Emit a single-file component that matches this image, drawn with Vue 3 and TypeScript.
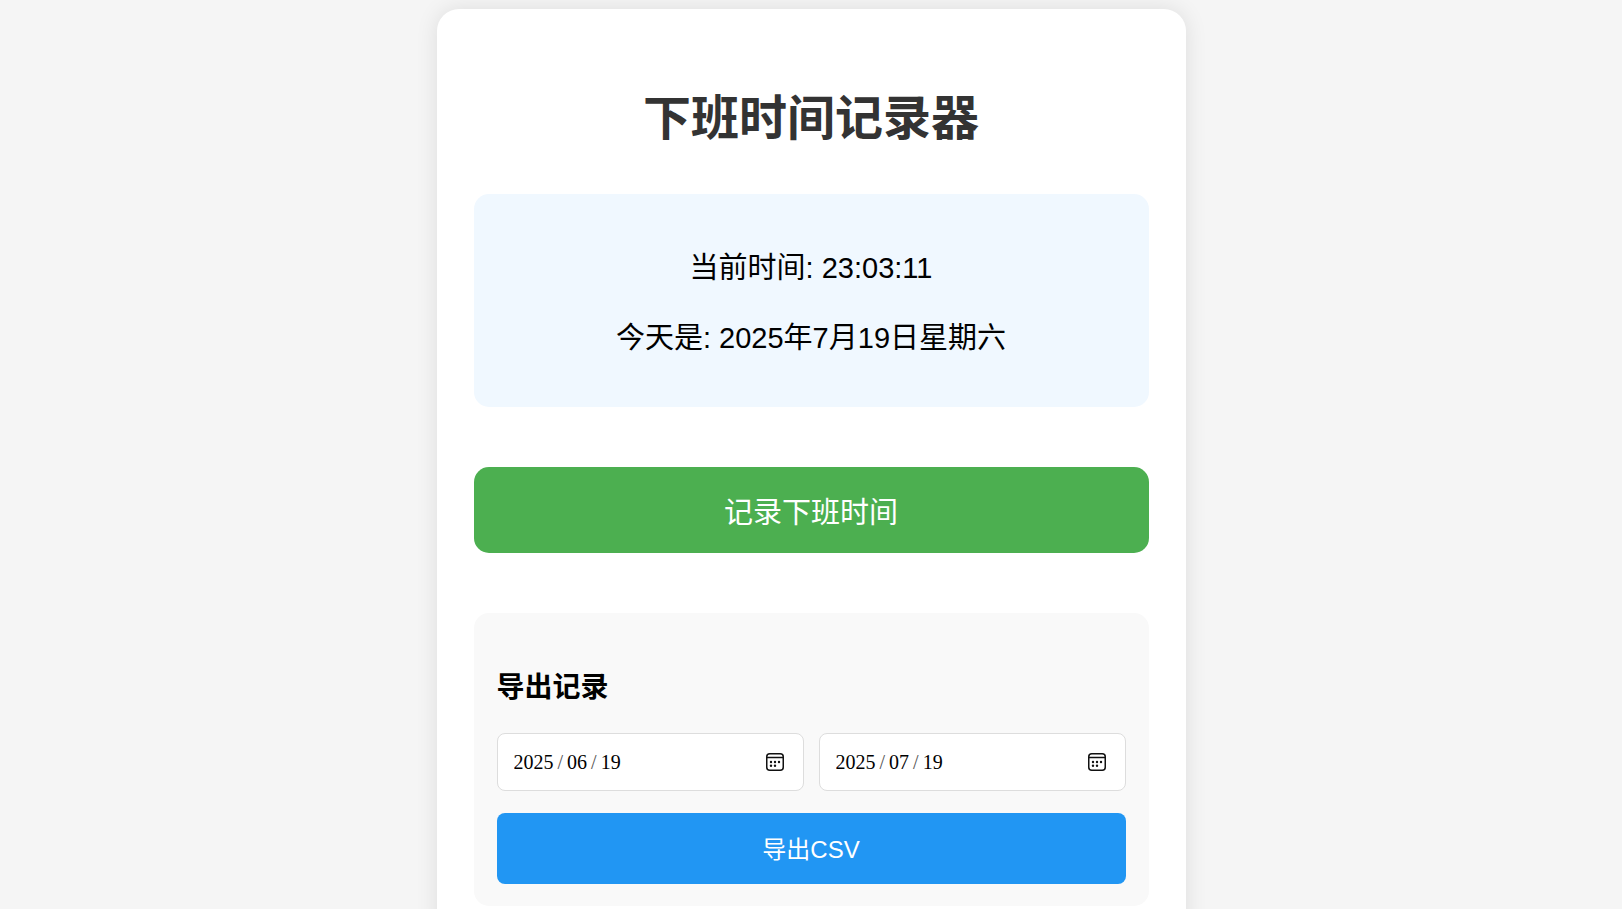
<script setup lang="ts">
import { ref } from 'vue'

interface DateField {
  id: string
  label: string
  value: string
}

const currentTime = ref('23:03:11')
const currentDate = ref('2025年7月19日星期六')
const dates = ref<DateField[]>([
  { id: 'start-date', label: '开始日期', value: '2025-06-19' },
  { id: 'end-date', label: '结束日期', value: '2025-07-19' },
])
</script>

<template>
  <main class="card">
    <h1>下班时间记录器</h1>

    <section class="clock">
      <p>当前时间: <span>{{ currentTime }}</span></p>
      <p>今天是: <span>{{ currentDate }}</span></p>
    </section>

    <button class="record" type="button">记录下班时间</button>

    <section class="export">
      <h3>导出记录</h3>
      <div class="range">
        <label v-for="d in dates" :key="d.id" class="date" :for="d.id">
          <input :id="d.id" v-model="d.value" type="date" :aria-label="d.label" />
          <svg class="calendar" viewBox="0 0 18 18" aria-hidden="true">
            <rect x="0.75" y="0.75" width="16.5" height="16.5" rx="3" />
            <path d="M1 4.5H17" />
            <g class="dots">
              <circle cx="5" cy="9" r="1.2" />
              <circle cx="9" cy="9" r="1.2" />
              <circle cx="13" cy="9" r="1.2" />
              <circle cx="5" cy="12.7" r="1.2" />
              <circle cx="9" cy="12.7" r="1.2" />
            </g>
          </svg>
        </label>
      </div>
      <button class="csv" type="button">导出CSV</button>
    </section>
  </main>
</template>

<style>
body {
  margin: 0;
  background: #f5f5f5;
}
</style>

<style scoped>
.card {
  box-sizing: border-box;
  max-width: 749px;
  margin: 9px auto;
  padding: 37px;
  border-radius: 22px;
  background: #fff;
  box-shadow: 0 0 22px rgba(0, 0, 0, 0.1);
  color: #000;
  font-family: "Liberation Sans", Arial, "Noto Sans CJK SC", sans-serif;
}

h1 {
  margin: 37px 0 39px;
  color: #333;
  font-size: 48px;
  line-height: 72px;
  text-align: center;
}

.clock {
  margin-bottom: 60px;
  padding: 25px 22px 19px;
  border-radius: 15px;
  background: #f0f8ff;
  font-size: 29px;
  line-height: 41px;
  text-align: center;
}

.clock p {
  margin: 29px 0;
}

button {
  display: block;
  width: 100%;
  border: 0;
  color: #fff;
  font-family: inherit;
  cursor: pointer;
}

.record {
  margin-bottom: 60px;
  padding: 25px 22px 19px;
  border-radius: 15px;
  background: #4caf50;
  font-size: 29px;
  line-height: 42px;
}

.export {
  padding: 22px 23px;
  border-radius: 15px;
  background: #f9f9f9;
}

h3 {
  margin: 32px 0 25px;
  font-size: 28px;
  line-height: 41px;
}

.range {
  display: flex;
  gap: 15px;
  margin-bottom: 22px;
}

.date {
  position: relative;
  flex: 1;
}

.date input {
  box-sizing: border-box;
  display: block;
  width: 100%;
  height: 58px;
  padding: 0 16px;
  border: 1px solid #ddd;
  border-radius: 8px;
  background: #fff;
  color: #000;
  font-family: "Liberation Serif", "Times New Roman", serif;
  font-size: 20px;
}

.date input::-webkit-datetime-edit-fields-wrapper {
  display: inline-grid;
  grid-template-columns: repeat(5, auto);
  grid-template-rows: auto;
}

/* Year, month, day; the separators fall into the two columns between them. */
.date input::-webkit-datetime-edit-year-field {
  grid-area: 1 / 1;
  padding: 0;
}

.date input::-webkit-datetime-edit-month-field {
  grid-area: 1 / 3;
  padding: 0;
}

.date input::-webkit-datetime-edit-day-field {
  grid-area: 1 / 5;
  padding: 0;
}

.date input::-webkit-datetime-edit-text {
  padding: 0 4px;
  color: #555;
}

.date input::-webkit-calendar-picker-indicator {
  opacity: 0;
}

.calendar {
  position: absolute;
  top: 20px;
  right: 20px;
  width: 18px;
  height: 18px;
  fill: none;
  stroke: #111;
  stroke-width: 1.5;
  pointer-events: none;
}

.dots {
  fill: #111;
  stroke: none;
}

.csv {
  padding: 19px 18px 17px;
  border-radius: 8px;
  background: #2196f3;
  font-size: 24px;
  line-height: 35px;
}
</style>
